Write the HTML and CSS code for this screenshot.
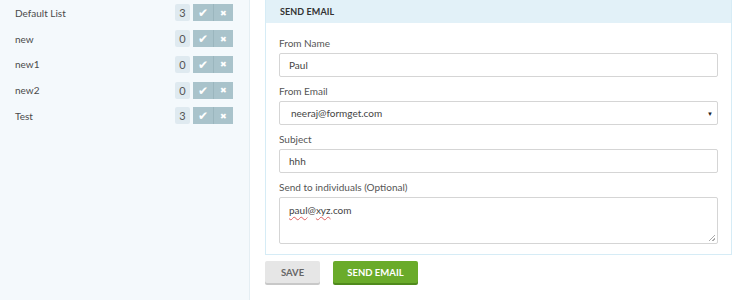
FILE: index.html
```html
<!DOCTYPE html>
<html>
<head>
<meta charset="utf-8">
<link rel="stylesheet" href="styles.css">
</head>
<body>
<div class="page">
  <aside class="sidebar">
    <div class="row"><span class="name">Default List</span><span class="count">3</span><span class="acts"><span class="act">&#10004;</span><span class="act x">&#10006;</span></span></div>
    <div class="row"><span class="name">new</span><span class="count">0</span><span class="acts"><span class="act">&#10004;</span><span class="act x">&#10006;</span></span></div>
    <div class="row"><span class="name">new1</span><span class="count">0</span><span class="acts"><span class="act">&#10004;</span><span class="act x">&#10006;</span></span></div>
    <div class="row"><span class="name">new2</span><span class="count">0</span><span class="acts"><span class="act">&#10004;</span><span class="act x">&#10006;</span></span></div>
    <div class="row"><span class="name">Test</span><span class="count">3</span><span class="acts"><span class="act">&#10004;</span><span class="act x">&#10006;</span></span></div>
  </aside>
  <main class="main">
    <section class="panel">
      <div class="panel-head">SEND EMAIL</div>
      <div class="panel-body">
        <label class="lbl">From Name</label>
        <div class="field">Paul</div>
        <label class="lbl">From Email</label>
        <div class="field select">neeraj@formget.com<span class="caret">&#9660;</span></div>
        <label class="lbl">Subject</label>
        <div class="field">hhh</div>
        <label class="lbl">Send to individuals (Optional)</label>
        <div class="field area"><span class="sp">paul</span>@<span class="sp">xyz</span>.com<span class="grip"></span></div>
      </div>
    </section>
    <div class="actions">
      <button class="btn save">SAVE</button>
      <button class="btn send">SEND EMAIL</button>
    </div>
  </main>
</div>
</body>
</html>
```
FILE: styles.css
```css
* { box-sizing: border-box; }
html, body { margin: 0; padding: 0; background: #fff; }
body { font-family: Lato, "Open Sans", "Liberation Sans", sans-serif; font-size: 10px; color: #444; }
.page { display: flex; height: 300px; }
.sidebar {
  width: 250px; flex: none; background: #f4f9fc; border-right: 1px solid #e4eef3;
  padding-top: 0;
}
.row { display: flex; align-items: center; height: 25.75px; padding-left: 15px; padding-right: 16px; }
.name { flex: 1; color: #4a4a4a; font-size: 10px; }
.count {
  width: 15px; height: 17px; background: #dfeaf0; color: #555; border-radius: 2px;
  display: flex; align-items: center; justify-content: center; font-size: 11px; margin-right: 3px;
}
.acts { display: flex; height: 17px; }
.act {
  width: 20px; height: 17px; background: #a9c3cb; color: #fff; display: flex;
  align-items: center; justify-content: center; font-size: 12px;
}
.act + .act { border-left: 1px solid #9bb6be; }
.act.x { font-size: 8px; }
.main { flex: none; width: 482px; padding-left: 15px; }
.panel { border: 1px solid #d6ecf6; border-top: none; width: 467px; }
.panel-head {
  height: 23px; background: #e2f1f8; padding-left: 14px; display: flex; align-items: center;
  font-weight: bold; font-size: 9px; color: #333; letter-spacing: 0.1px;
}
.panel-body { padding: 13px 13px 10px 13px; display: flex; flex-direction: column; }
.lbl { color: #555; font-size: 10px; height: 15px; line-height: 15px; margin-bottom: 2px; }
.field {
  height: 24px; border: 1px solid #d5d5d5; border-radius: 2px; padding-left: 9px;
  display: flex; align-items: center; font-size: 10px; color: #444; margin-bottom: 7px; position: relative;
}
.field.select { padding-left: 11px; }
.caret { position: absolute; right: 4px; top: 8px; font-size: 6px; color: #222; }
.field.area { height: 47px; align-items: flex-start; padding-top: 6px; margin-bottom: 0; }
.sp { text-decoration: underline wavy #e06060; text-decoration-thickness: 1px; text-underline-offset: 2px; }
.grip {
  position: absolute; right: 2px; bottom: 2px; width: 6px; height: 6px;
  background: linear-gradient(135deg, transparent 45%, #aaa 45%, #aaa 55%, transparent 55%, transparent 75%, #aaa 75%, #aaa 85%, transparent 85%);
}
.actions { display: flex; gap: 13px; margin-top: 6px; }
.btn {
  height: 22px; border: none; border-radius: 2px; font-family: inherit; font-weight: bold;
  font-size: 9.5px; padding: 0; cursor: pointer;
}
.save { width: 55px; background: #e6e6e6; color: #666; box-shadow: 0 2px 0 #c8c8c8; }
.send { width: 85px; background: #6aab2a; color: #fff; box-shadow: 0 2px 0 #4f8a1c; }
```
